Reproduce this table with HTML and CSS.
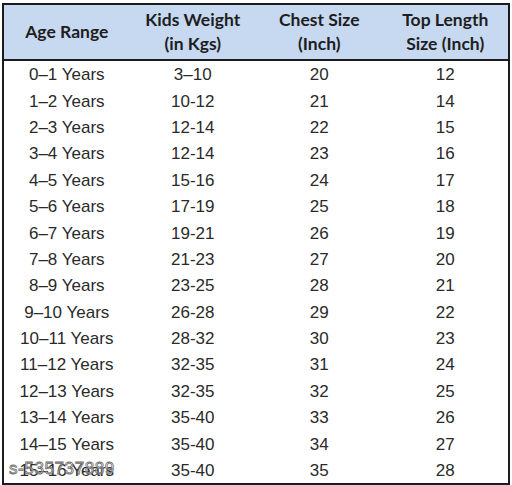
FILE: index.html
```html
<!DOCTYPE html>
<html lang="en">
<head>
    <meta charset="UTF-8">
    <meta name="viewport" content="width=device-width, initial-scale=1.0">
    <title>Kids Size Chart</title>
    <link rel="stylesheet" href="styles.css">
</head>
<body>

<div class="chart">
    <table class="size-table">
        <thead>
            <tr>
                <th>Age Range</th>
                <th>Kids Weight<br>(in Kgs)</th>
                <th>Chest Size<br>(Inch)</th>
                <th>Top Length<br>Size (Inch)</th>
            </tr>
        </thead>
        <tbody>
            <tr><td>0–1 Years</td><td>3–10</td><td>20</td><td>12</td></tr>
            <tr><td>1–2 Years</td><td>10-12</td><td>21</td><td>14</td></tr>
            <tr><td>2–3 Years</td><td>12-14</td><td>22</td><td>15</td></tr>
            <tr><td>3–4 Years</td><td>12-14</td><td>23</td><td>16</td></tr>
            <tr><td>4–5 Years</td><td>15-16</td><td>24</td><td>17</td></tr>
            <tr><td>5–6 Years</td><td>17-19</td><td>25</td><td>18</td></tr>
            <tr><td>6–7 Years</td><td>19-21</td><td>26</td><td>19</td></tr>
            <tr><td>7–8 Years</td><td>21-23</td><td>27</td><td>20</td></tr>
            <tr><td>8–9 Years</td><td>23-25</td><td>28</td><td>21</td></tr>
            <tr><td>9–10 Years</td><td>26-28</td><td>29</td><td>22</td></tr>
            <tr><td>10–11 Years</td><td>28-32</td><td>30</td><td>23</td></tr>
            <tr><td>11–12 Years</td><td>32-35</td><td>31</td><td>24</td></tr>
            <tr><td>12–13 Years</td><td>32-35</td><td>32</td><td>25</td></tr>
            <tr><td>13–14 Years</td><td>35-40</td><td>33</td><td>26</td></tr>
            <tr><td>14–15 Years</td><td>35-40</td><td>34</td><td>27</td></tr>
            <tr><td>15–16 Years</td><td>35-40</td><td>35</td><td>28</td></tr>
        </tbody>
    </table>
    <!-- marca del vendedor encima de la tabla -->
    <span class="watermark">s-535737889</span>
</div>

</body>
</html>
```

FILE: styles.css
```css
body {
    margin: 0;
    background-color: white;
    font-family: "Liberation Sans", Arial, sans-serif;
}
.chart {
    position: relative;
    width: 508px;
    margin: 3px 0 0 2px;
}
.size-table {
    width: 508px;
    border-collapse: collapse;
    border: 2px solid #1c1c1c;
    table-layout: fixed;
}
.size-table th {
    height: 54px;
    padding: 0;
    background-color: #c6d9f1;
    border-bottom: 2px solid #1c1c1c;
    font-family: Lato, "Open Sans", sans-serif;
    font-weight: bold;
    font-size: 17.5px;
    line-height: 24px;
    color: #1e1e1e;
    text-align: center;
}
.size-table td {
    height: 24.4px;
    padding: 2px 0 0 0;
    font-size: 17px;
    line-height: 20px;
    color: #2a2a2a;
    text-align: center;
}
.watermark {
    position: absolute;
    left: 7px;
    top: 456px;
    font-size: 17px;
    letter-spacing: 0.6px;
    color: rgba(255, 255, 255, 0.55);
    -webkit-text-stroke: 0.8px #6a6a6a;
}
```
